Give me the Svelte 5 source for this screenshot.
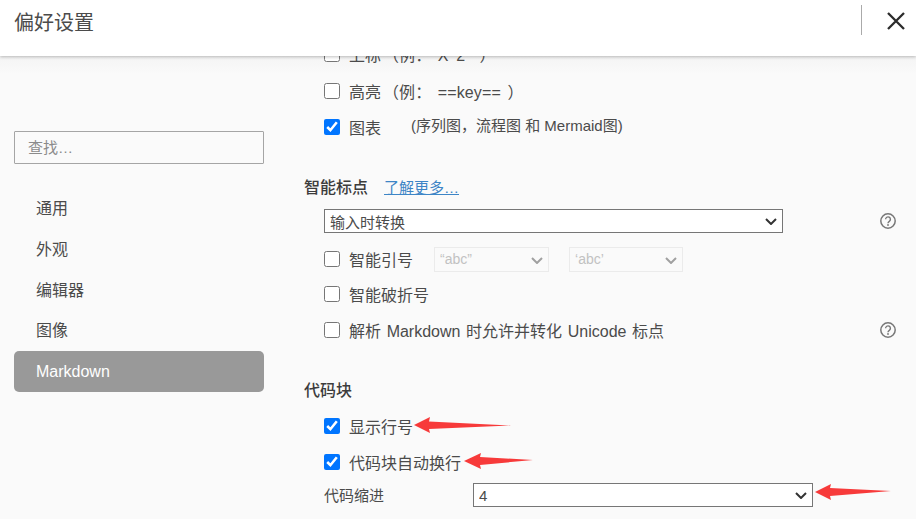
<script>
	const nav = ['通用', '外观', '编辑器', '图像', 'Markdown'];
	const active = 'Markdown';
</script>

{#snippet help()}
	<svg class="help" width="16" height="16" viewBox="0 0 16 16" aria-hidden="true">
		<circle cx="8" cy="8" r="7.2" fill="none" stroke="#777" stroke-width="1.5" />
		<path d="M5.6 6.3a2.4 2.4 0 1 1 3.7 2c-.9.6-1.3 1-1.3 2" fill="none" stroke="#777" stroke-width="1.4" />
		<circle cx="8" cy="12" r=".9" fill="#777" />
	</svg>
{/snippet}

{#snippet dropdown(cls, value, disabled)}
	<span class="select-wrap {cls}">
		<select {disabled}><option>{value}</option></select>
		<svg width="12" height="7" viewBox="0 0 12 7" aria-hidden="true">
			<path d="M1 1l5 5 5-5" fill="none" stroke-width="2" />
		</svg>
	</span>
{/snippet}

<div class="window">
	<header class="topbar">
		<h1>偏好设置</h1>
		<div class="actions">
			<span class="divider"></span>
			<button class="close" aria-label="关闭">
				<svg width="18" height="18" viewBox="0 0 18 18">
					<path d="M1 1l16 16M17 1L1 17" stroke="#2b2b2b" stroke-width="2.3" fill="none" />
				</svg>
			</button>
		</div>
	</header>

	<div class="body">
		<aside class="sidebar">
			<input class="search" type="text" placeholder="查找…" />
			<nav>
				{#each nav as item (item)}
					<div class="nav-item" class:nav-item--active={item === active}>{item}</div>
				{/each}
			</nav>
		</aside>

		<main class="content">
			<label class="row row--clipped"><input type="checkbox" /><span>上标</span><span class="hint">（例： X^2^ ）</span></label>
			<label class="row row--second"><input type="checkbox" /><span>高亮</span><span class="hint">（例： ==key== ）</span></label>
			<label class="row"><input type="checkbox" checked /><span>图表</span><span class="note">(序列图，流程图 和 Mermaid图)</span></label>

			<div class="section section--punct"><h2>智能标点</h2><a href="#more">了解更多…</a></div>
			<div class="row row--select">
				{@render dropdown('wide', '输入时转换', false)}
				{@render help()}
			</div>
			<div class="row row--quotes">
				<label class="inline"><input type="checkbox" /><span>智能引号</span></label>
				{@render dropdown('quote', '“abc”', true)}
				{@render dropdown('quote quote--single', '‘abc’', true)}
			</div>
			<label class="row row--tight"><input type="checkbox" /><span>智能破折号</span></label>
			<div class="row row--help">
				<label class="inline"><input type="checkbox" /><span class="spaced">解析 Markdown 时允许并转化 Unicode 标点</span></label>
				{@render help()}
			</div>

			<div class="section section--code"><h2>代码块</h2></div>
			<label class="row"><input type="checkbox" checked /><span>显示行号</span></label>
			<label class="row"><input type="checkbox" checked /><span>代码块自动换行</span></label>
			<div class="row row--indent">
				<span class="field-label">代码缩进</span>
				{@render dropdown('indent', '4', false)}
			</div>
		</main>
	</div>

	<!-- red arrows drawn on top of the screenshot -->
	<svg class="annotations" width="916" height="519" viewBox="0 0 916 519" aria-hidden="true">
		<path d="M414 425L430 417L429 421.5L511 425.5L429 429L430 433Z" />
		<path d="M464 461L481 453L480 457L533 460L480 465L481 469Z" />
		<path d="M815 492L831 484L830 488L891 491L830 496L831 500Z" />
	</svg>
</div>

<style>
	:global(body) {
		margin: 0;
		background: #fafafa;
		overflow: hidden;
	}
	.window {
		position: relative;
		width: 916px;
		height: 519px;
		overflow: hidden;
		display: flex;
		flex-direction: column;
		color: #4b4b4b;
		font-family: 'Liberation Sans', 'Noto Sans CJK SC', sans-serif;
		font-size: 16px;
	}
	.topbar {
		position: relative;
		z-index: 1;
		flex: 0 0 56px;
		display: flex;
		align-items: flex-start;
		justify-content: space-between;
		background: #fff;
		box-shadow: 0 1px 3px rgba(0, 0, 0, 0.25);
	}
	h1 {
		margin: 9px 0 0 14px;
		font-size: 20px;
		line-height: 28px;
		font-weight: 400;
	}
	.actions {
		display: flex;
		margin: 5px 11px 0 0;
	}
	.divider {
		width: 1px;
		height: 30px;
		background: #aaa;
		margin-right: 25px;
	}
	.close {
		width: 18px;
		height: 18px;
		margin-top: 7px;
		padding: 0;
		border: none;
		background: none;
	}
	.close svg {
		display: block;
	}
	.body {
		flex: 1;
		min-height: 0;
		display: flex;
		background: linear-gradient(#f4f4f4, #fafafa 18px);
	}
	.sidebar {
		flex: 0 0 290px;
		box-sizing: border-box;
		padding: 75px 0 0 14px;
	}
	.search {
		display: block;
		box-sizing: border-box;
		width: 250px;
		height: 33px;
		padding: 0 13px;
		border: 1px solid #a5a5a5;
		border-radius: 1px;
		background: #fafafa;
		font: inherit;
		font-size: 15px;
		outline: none;
	}
	.search::placeholder {
		color: #8b8b8b;
		opacity: 1;
	}
	nav {
		margin-top: 24px;
		width: 250px;
	}
	.nav-item {
		height: 40.75px;
		line-height: 42px;
		padding-left: 22px;
		border-radius: 5px;
	}
	.nav-item--active {
		background: #999;
		color: #fff;
	}
	.content {
		flex: 1;
		min-width: 0;
		padding: 0 20px 0 14px;
		overflow: hidden;
	}
	.row {
		display: flex;
		align-items: center;
		height: 36px;
		padding-left: 20px;
	}
	.row--clipped {
		margin-top: -20px;
	}
	.row--second {
		margin-top: 1px;
	}
	.row input[type='checkbox'] {
		width: 16px;
		height: 16px;
		margin: 0 9px 0 0;
		flex: none;
	}
	.inline {
		display: flex;
		align-items: center;
	}
	.hint {
		margin-left: 2px;
		word-spacing: 2px;
		letter-spacing: 0.1px;
	}
	.note {
		margin-left: 30px;
		margin-top: -5px;
		font-size: 15px;
	}
	.spaced {
		word-spacing: 1.2px;
	}
	.section {
		display: flex;
		align-items: center;
		height: 24px;
	}
	.section--punct {
		margin-top: 29px;
	}
	.section--code {
		margin-top: 29px;
		margin-bottom: 7px;
	}
	h2 {
		margin: 0;
		font-size: 16px;
		font-weight: 500;
		color: #3c3c3c;
	}
	a {
		margin-left: 16px;
		font-size: 15px;
		color: #3d85c6;
	}
	.select-wrap {
		position: relative;
		display: block;
		flex: none;
		height: 24px;
	}
	.select-wrap svg {
		position: absolute;
		top: 9px;
		right: 6px;
		stroke: #333;
	}
	select {
		display: block;
		box-sizing: border-box;
		width: 100%;
		height: 100%;
		padding: 0 20px 0 5px;
		appearance: none;
		font: inherit;
		font-size: 15px;
		color: #4b4b4b;
		background-color: #fff;
		border: 1px solid #767676;
		border-radius: 0;
	}
	.row--select {
		height: 24px;
		margin-top: 11px;
		justify-content: space-between;
	}
	.wide {
		width: 459px;
	}
	.wide select {
		padding-top: 2px;
	}
	.row--quotes {
		margin-top: 8px;
	}
	.quote {
		width: 115px;
		height: 25px;
		margin-left: 21px;
	}
	.quote svg {
		stroke: #a0a0a0;
		right: 6px;
		top: 10px;
	}
	.quote select {
		font-size: 14px;
		color: #aaa;
		background: #fafafa;
		border-color: #e6e6e6;
	}
	.quote--single {
		width: 114px;
		margin-left: 20px;
	}
	.row--tight {
		margin-top: -1px;
	}
	.row--help {
		justify-content: space-between;
	}
	.help {
		flex: none;
	}
	.row--indent {
		height: 30px;
	}
	.field-label {
		width: 149px;
		flex: none;
		font-size: 15px;
		margin-top: -2px;
	}
	.indent {
		width: 340px;
	}
	.annotations {
		position: absolute;
		top: 0;
		left: 0;
		z-index: 2;
		pointer-events: none;
		fill: #f73a3a;
	}
</style>
